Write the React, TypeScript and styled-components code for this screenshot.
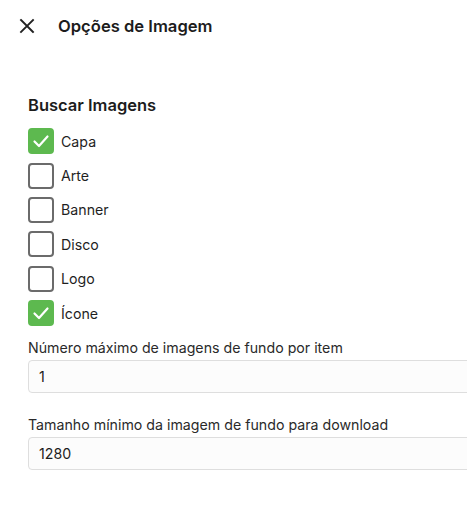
import React from "react";
import styled, { createGlobalStyle } from "styled-components";

const Global = createGlobalStyle`
  html, body { margin: 0; padding: 0; background: #ffffff; }
  body { font-family: "Inter", "Noto Sans", sans-serif; color: #1c1c1c; }
  * { box-sizing: border-box; }
`;

const Page = styled.div`
  width: 467px;
  height: 520px;
  overflow: hidden;
  display: flex;
  flex-direction: column;
`;

const Header = styled.header`
  display: flex;
  align-items: center;
  height: 52px;
  padding: 0 0 0 18px;
  gap: 22px;
`;

const CloseButton = styled.button`
  display: flex;
  align-items: center;
  justify-content: center;
  width: 18px;
  height: 18px;
  padding: 0;
  border: none;
  background: transparent;
  color: #222;
  cursor: pointer;
`;

const Title = styled.h1`
  margin: 0;
  font-size: 16.6px;
  font-weight: 600;
  color: #1c1c1c;
`;

const Content = styled.div`
  display: flex;
  flex-direction: column;
  padding: 42px 0 0 28px;
`;

const SectionTitle = styled.h2`
  margin: 0 0 8px;
  font-size: 16.5px;
  font-weight: 600;
  line-height: 22px;
  color: #1c1c1c;
`;

const CheckList = styled.div`
  display: flex;
  flex-direction: column;
`;

const CheckRow = styled.label`
  display: flex;
  align-items: center;
  gap: 7px;
  height: 34.4px;
  font-size: 14.2px;
  color: #1f1f1f;
  cursor: pointer;
`;

const Box = styled.span<{ $checked: boolean }>`
  display: flex;
  align-items: center;
  justify-content: center;
  width: 26px;
  height: 26px;
  border-radius: 4px;
  border: 2px solid ${(p) => (p.$checked ? "#5db94f" : "#6b6b6b")};
  background: ${(p) => (p.$checked ? "#5db94f" : "#ffffff")};
  color: #ffffff;
`;

const Field = styled.div<{ $top: number }>`
  display: flex;
  flex-direction: column;
  gap: 2px;
  margin-top: ${(p) => p.$top}px;
`;

const FieldLabel = styled.label`
  font-size: 14.2px;
  line-height: 20px;
  color: #2a2a2a;
`;

const Input = styled.input`
  width: 460px;
  height: 33px;
  padding: 0 10px;
  border: 1px solid #dedede;
  border-radius: 4px;
  background: #fcfcfc;
  font-family: "Inter", "Noto Sans", sans-serif;
  font-size: 14.2px;
  color: #1c1c1c;
  outline: none;
`;

const items = [
  { label: "Capa", checked: true },
  { label: "Arte", checked: false },
  { label: "Banner", checked: false },
  { label: "Disco", checked: false },
  { label: "Logo", checked: false },
  { label: "Ícone", checked: true },
];

export default function App() {
  return (
    <Page>
      <Global />
      <Header>
        <CloseButton aria-label="Fechar">
          <svg width="16" height="16" viewBox="0 0 16 16" fill="none">
            <path d="M2 2L14 14M14 2L2 14" stroke="currentColor" strokeWidth="1.9" strokeLinecap="square" />
          </svg>
        </CloseButton>
        <Title>Opções de Imagem</Title>
      </Header>
      <Content>
        <SectionTitle>Buscar Imagens</SectionTitle>
        <CheckList>
          {items.map((it) => (
            <CheckRow key={it.label}>
              <Box $checked={it.checked}>
                {it.checked && (
                  <svg width="18" height="18" viewBox="0 0 18 18" fill="none">
                    <path d="M2.5 9.5L7 14L15.5 4.5" stroke="currentColor" strokeWidth="2.2" strokeLinecap="round" strokeLinejoin="round" />
                  </svg>
                )}
              </Box>
              {it.label}
            </CheckRow>
          ))}
        </CheckList>
        <Field $top={8}>
          <FieldLabel>Número máximo de imagens de fundo por item</FieldLabel>
          <Input defaultValue="1" />
        </Field>
        <Field $top={22}>
          <FieldLabel>Tamanho mínimo da imagem de fundo para download</FieldLabel>
          <Input defaultValue="1280" />
        </Field>
      </Content>
    </Page>
  );
}
